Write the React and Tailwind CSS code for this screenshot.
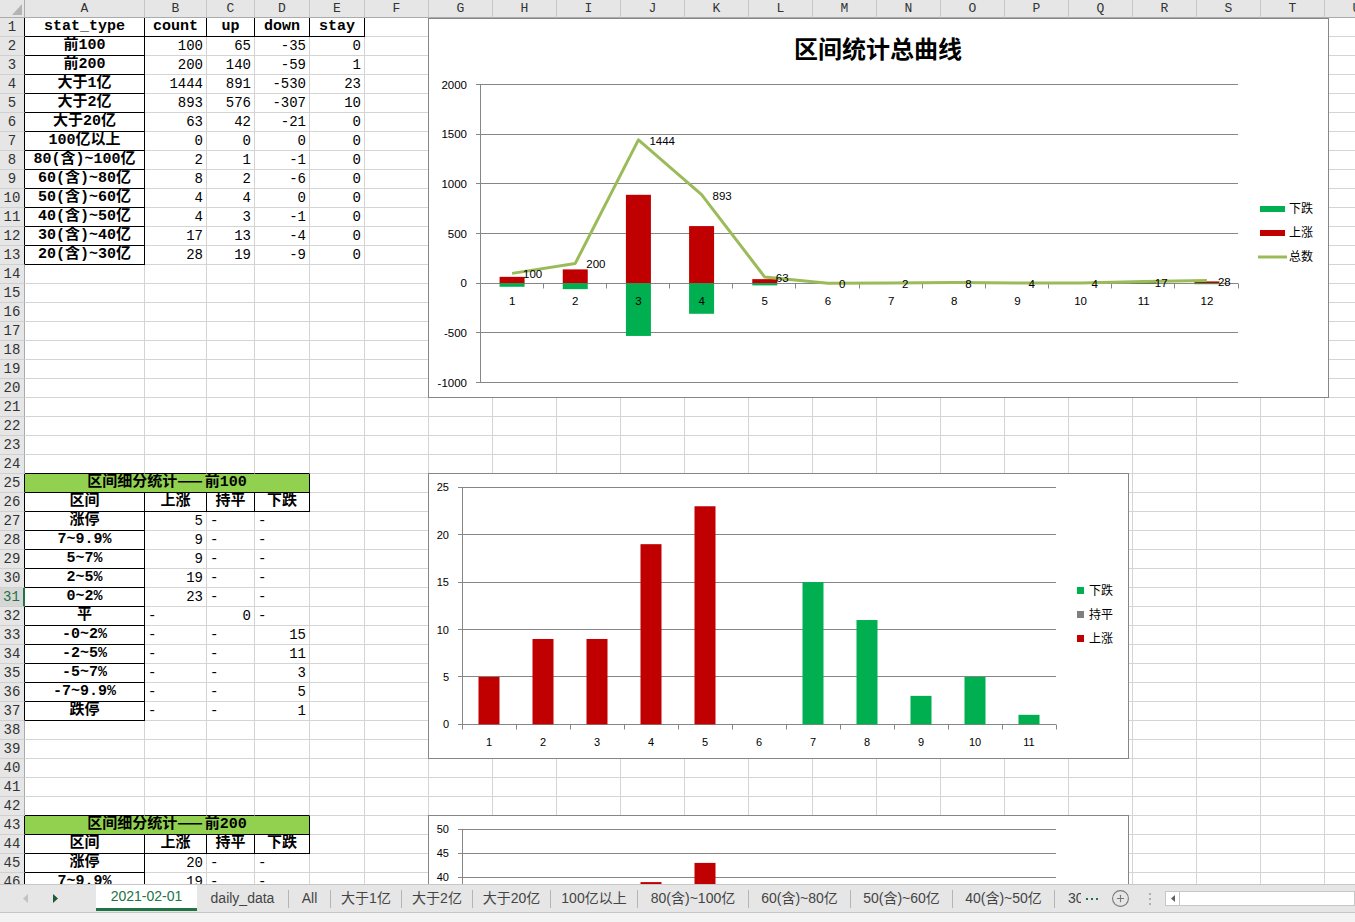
import React from "react";
import clsx from "clsx";
import { CirclePlus } from "lucide-react";

const MONO = "font-['Liberation_Mono','Noto_Sans_CJK_SC',monospace]";
const COLS = "grid grid-cols-[25px_120px_62px_48px_55px_55px_repeat(17,64px)]";
const LETTERS = ["A", "B", "C", "D", "E", "F", "G", "H", "I", "J", "K", "L", "M", "N", "O", "P", "Q", "R", "S", "T", "U", "V"];

// summary table
const T1 = [
  ["stat_type", "count", "up", "down", "stay"],
  ["前100", 100, 65, -35, 0],
  ["前200", 200, 140, -59, 1],
  ["大于1亿", 1444, 891, -530, 23],
  ["大于2亿", 893, 576, -307, 10],
  ["大于20亿", 63, 42, -21, 0],
  ["100亿以上", 0, 0, 0, 0],
  ["80(含)~100亿", 2, 1, -1, 0],
  ["60(含)~80亿", 8, 2, -6, 0],
  ["50(含)~60亿", 4, 4, 0, 0],
  ["40(含)~50亿", 4, 3, -1, 0],
  ["30(含)~40亿", 17, 13, -4, 0],
  ["20(含)~30亿", 28, 19, -9, 0],
];

const TOP100 = [
  ["涨停", 5, "-", "-"],
  ["7~9.9%", 9, "-", "-"],
  ["5~7%", 9, "-", "-"],
  ["2~5%", 19, "-", "-"],
  ["0~2%", 23, "-", "-"],
  ["平", "-", 0, "-"],
  ["-0~2%", "-", "-", 15],
  ["-2~5%", "-", "-", 11],
  ["-5~7%", "-", "-", 3],
  ["-7~9.9%", "-", "-", 5],
  ["跌停", "-", "-", 1],
];

const TOP200 = [
  ["涨停", 20, "-", "-"],
  ["7~9.9%", 19, "-", "-"],
];

function buildCells() {
  const cells = {};
  const set = (r, c, t, align, bold) => {
    cells[`${r}-${c}`] = { t: String(t), align, bold };
  };
  T1.forEach((row, i) => {
    const r = i + 1;
    row.forEach((v, c) => {
      if (r === 1 || c === 0) set(r, c, v, "c", true);
      else set(r, c, v, "r", false);
    });
  });
  const detail = (start, title, rows) => {
    set(start, 0, title, "c", true);
    ["区间", "上涨", "持平", "下跌"].forEach((h, c) => set(start + 1, c, h, "c", true));
    rows.forEach((row, i) => {
      row.forEach((v, c) => {
        const r = start + 2 + i;
        if (c === 0) set(r, 0, v, "c", true);
        else if (v === "-") set(r, c, "-", "l", false);
        else set(r, c, v, "r", false);
      });
    });
  };
  detail(25, "区间细分统计——前100", TOP100);
  detail(43, "区间细分统计——前200", TOP200);
  return cells;
}

const CELLS = buildCells();

function boxed(r, c) {
  if (r === 1) return c <= 4;
  if (r >= 2 && r <= 13) return c === 0;
  if (r === 25 || r === 26 || r === 43 || r === 44) return c <= 3;
  if (r >= 27 && r <= 37) return c === 0;
  if (r >= 45) return c === 0;
  return false;
}

const isMerged = (r) => r === 25 || r === 43;

// em dashes need the CJK font, the mono one draws them half width
function CellText({ t }) {
  if (!t.includes("——")) return t;
  const [a, b] = t.split("——");
  return (
    <>
      {a}
      <span className="font-['Noto_Sans_CJK_SC',sans-serif] leading-[0] tracking-[2px]">——</span>
      {b}
    </>
  );
}

function Cell({ r, c }) {
  const d = CELLS[`${r}-${c}`];
  const rb = boxed(r, c) || boxed(r, c + 1);
  const bb = boxed(r, c) || boxed(r + 1, c);
  const merged = isMerged(r) && c === 0;
  return (
    <div
      className={clsx(
        "h-[19px] border-r border-b overflow-hidden whitespace-nowrap px-[3px] leading-[18px] text-black",
        MONO,
        rb ? "border-r-black" : "border-r-[#d4d4d4]",
        bb ? "border-b-black" : "border-b-[#d4d4d4]",
        merged && "col-span-4 bg-[#92d050]",
        d && d.bold ? "font-bold text-[15px]" : "text-[14px]",
        d && d.align === "c" && "text-center",
        d && d.align === "r" && "text-right",
        d && d.align === "l" && "text-left"
      )}
    >
      {d ? <CellText t={d.t} /> : ""}
    </div>
  );
}

function RowHead({ r }) {
  const active = r === 31;
  return (
    <div
      className={clsx(
        "h-[19px] border-b border-b-[#d0d0d0] text-center text-[14px] leading-[18px]",
        MONO,
        active ? "bg-[#d6d6d6] text-[#217346] border-r-2 border-r-[#217346]" : "bg-[#e6e6e6] text-[#333] border-r",
        !active && (boxed(r, 0) ? "border-r-black" : "border-r-[#ababab]")
      )}
    >
      {r}
    </div>
  );
}

function ColumnHeader() {
  return (
    <div className={clsx(COLS, "h-[18px]")}>
      <div className="relative h-[18px] bg-[#e6e6e6] border-r border-b border-r-[#ababab] border-b-[#ababab]">
        <svg className="absolute right-[2px] bottom-[2px]" width="10" height="11">
          <polygon points="10,0 10,11 0,11" fill="#b4b4b4" />
        </svg>
      </div>
      {LETTERS.map((l) => (
        <div
          key={l}
          className={clsx(
            "h-[18px] bg-[#e6e6e6] border-r border-b border-r-[#c6c6c6] border-b-[#ababab] text-center text-[13px] leading-[17px] text-[#333]",
            MONO
          )}
        >
          {l}
        </div>
      ))}
    </div>
  );
}

function Sheet() {
  const items = [];
  for (let r = 1; r <= 46; r++) {
    items.push(<RowHead key={`h${r}`} r={r} />);
    for (let c = 0; c < 22; c++) {
      if (isMerged(r) && c >= 1 && c <= 3) continue;
      items.push(<Cell key={`${r}-${c}`} r={r} c={c} />);
    }
  }
  return <div className={clsx(COLS, "auto-rows-[19px]")}>{items}</div>;
}

const crisp = (v) => Math.floor(v) + 0.5;
const GRID = "#868686";
const RED = "#c00000";
const GREEN = "#00b050";

// 区间统计总曲线
const UP1 = [65, 140, 891, 576, 42, 0, 1, 2, 4, 3, 13, 19];
const DN1 = [-35, -59, -530, -307, -21, 0, -1, -6, 0, -1, -4, -9];
const TOT1 = [100, 200, 1444, 893, 63, 0, 2, 8, 4, 4, 17, 28];

function Chart1() {
  const y0 = 283.3;
  const k = 0.09933;
  const Y = (v) => y0 - v * k;
  const step = 758 / 12;
  const cx = (i) => 480.5 + (i + 0.5) * step;
  const pts = TOT1.map((v, i) => `${cx(i)},${Y(v)}`).join(" ");
  return (
    <div className="absolute left-[428px] top-[18px] w-[901px] h-[380px] border border-[#868686] bg-white">
      <svg width="899" height="378" className="block font-['Liberation_Sans','Noto_Sans_CJK_SC',sans-serif]">
        <g transform="translate(-429 -19)">
          <text x="878" y="58" textAnchor="middle" fontSize="24" fontWeight="700" fill="#000" className="font-['Noto_Sans_CJK_SC',sans-serif]">
            区间统计总曲线
          </text>
          {[2000, 1500, 1000, 500, 0, -500, -1000].map((v) => (
            <g key={v}>
              <line x1="476" x2="1238" y1={crisp(Y(v))} y2={crisp(Y(v))} stroke={GRID} />
              <text x="467" y={Y(v) + 4} textAnchor="end" fontSize="11.5" fill="#000">
                {v}
              </text>
            </g>
          ))}
          <line x1="480.5" x2="480.5" y1={crisp(Y(2000))} y2={crisp(Y(-1000))} stroke={GRID} />
          {Array.from({ length: 13 }, (_, i) => (
            <line key={i} x1={crisp(480 + i * step)} x2={crisp(480 + i * step)} y1={crisp(y0)} y2={crisp(y0) + 5} stroke={GRID} />
          ))}
          {UP1.map((v, i) => (
            <rect key={`u${i}`} x={cx(i) - 12.5} y={Y(v)} width="25" height={v * k} fill={RED} />
          ))}
          {DN1.map((v, i) => (
            <rect key={`d${i}`} x={cx(i) - 12.5} y={y0} width="25" height={-v * k} fill={GREEN} />
          ))}
          {UP1.map((_, i) => (
            <text key={`x${i}`} x={cx(i)} y="305" textAnchor="middle" fontSize="11.5" fill="#000">
              {i + 1}
            </text>
          ))}
          <polyline points={pts} fill="none" stroke="#9bbb59" strokeWidth="3" strokeLinejoin="round" />
          {TOT1.map((v, i) => (
            <text key={`l${i}`} x={cx(i) + 11} y={Y(v) + 5} fontSize="11.5" fill="#000">
              {v}
            </text>
          ))}
          <rect x="1260" y="206" width="25" height="6" fill={GREEN} />
          <rect x="1260" y="230" width="25" height="6" fill={RED} />
          <line x1="1258" x2="1287" y1="257" y2="257" stroke="#9bbb59" strokeWidth="3" />
          <g fontSize="12" fill="#000" className="font-['Noto_Sans_CJK_SC',sans-serif]">
            <text x="1289" y="213">下跌</text>
            <text x="1289" y="237">上涨</text>
            <text x="1289" y="261">总数</text>
          </g>
        </g>
      </svg>
    </div>
  );
}

// 前100 bar chart
const UP2 = [5, 9, 9, 19, 23, 0, 0, 0, 0, 0, 0];
const DN2 = [0, 0, 0, 0, 0, 0, 15, 11, 3, 5, 1];

function Chart2() {
  const y0 = 724.3;
  const k = 9.48;
  const Y = (v) => y0 - v * k;
  const cx = (i) => 462 + (i + 0.5) * 54;
  return (
    <div className="absolute left-[428px] top-[473px] w-[701px] h-[286px] border border-[#868686] bg-white">
      <svg width="699" height="284" className="block font-['Liberation_Sans','Noto_Sans_CJK_SC',sans-serif]">
        <g transform="translate(-429 -474)">
          {[25, 20, 15, 10, 5, 0].map((v) => (
            <g key={v}>
              <line x1="458" x2="1056" y1={crisp(Y(v))} y2={crisp(Y(v))} stroke={GRID} />
              <text x="449" y={Y(v) + 4} textAnchor="end" fontSize="11" fill="#000">
                {v}
              </text>
            </g>
          ))}
          <line x1="462.5" x2="462.5" y1={crisp(Y(25))} y2={crisp(y0)} stroke={GRID} />
          {Array.from({ length: 12 }, (_, i) => (
            <line key={i} x1={462.5 + i * 54} x2={462.5 + i * 54} y1={crisp(y0)} y2={crisp(y0) + 5} stroke={GRID} />
          ))}
          {UP2.map((v, i) => (
            <rect key={`u${i}`} x={cx(i) - 10.5} y={Y(v)} width="21" height={v * k} fill={RED} />
          ))}
          {DN2.map((v, i) => (
            <rect key={`d${i}`} x={cx(i) - 10.5} y={Y(v)} width="21" height={v * k} fill={GREEN} />
          ))}
          {UP2.map((_, i) => (
            <text key={`x${i}`} x={cx(i)} y="746" textAnchor="middle" fontSize="11" fill="#000">
              {i + 1}
            </text>
          ))}
          <rect x="1077" y="587" width="7" height="7" fill={GREEN} />
          <rect x="1077" y="611" width="7" height="7" fill="#7f7f7f" />
          <rect x="1077" y="635" width="7" height="7" fill={RED} />
          <g fontSize="12" fill="#000" className="font-['Noto_Sans_CJK_SC',sans-serif]">
            <text x="1089" y="595">下跌</text>
            <text x="1089" y="619">持平</text>
            <text x="1089" y="643">上涨</text>
          </g>
        </g>
      </svg>
    </div>
  );
}

// 前200 bar chart (cut off by the sheet tabs)
function Chart3() {
  const Y = (v) => 829.3 + (50 - v) * 4.8;
  const cx = (i) => 462 + (i + 0.5) * 54;
  return (
    <div className="absolute left-[428px] top-[815px] w-[701px] h-[240px] border border-[#868686] bg-white">
      <svg width="699" height="238" className="block font-['Liberation_Sans','Noto_Sans_CJK_SC',sans-serif]">
        <g transform="translate(-429 -816)">
          {[50, 45, 40, 35].map((v) => (
            <g key={v}>
              <line x1="458" x2="1056" y1={crisp(Y(v))} y2={crisp(Y(v))} stroke={GRID} />
              <text x="449" y={Y(v) + 4} textAnchor="end" fontSize="11" fill="#000">
                {v}
              </text>
            </g>
          ))}
          <line x1="462.5" x2="462.5" y1={crisp(Y(50))} y2="1000" stroke={GRID} />
          <rect x={cx(3) - 10.5} y={Y(39)} width="21" height="200" fill={RED} />
          <rect x={cx(4) - 10.5} y={Y(43)} width="21" height="200" fill={RED} />
        </g>
      </svg>
    </div>
  );
}

const TABS = [
  ["daily_data", "w-[91px]"],
  ["All", "w-[41px]"],
  ["大于1亿", "w-[70px]"],
  ["大于2亿", "w-[70px]"],
  ["大于20亿", "w-[77px]"],
  ["100亿以上", "w-[86px]"],
  ["80(含)~100亿", "w-[110px]"],
  ["60(含)~80亿", "w-[101px]"],
  ["50(含)~60亿", "w-[101px]"],
  ["40(含)~50亿", "w-[101px]"],
];

function TabBar() {
  return (
    <div className="h-[28px] shrink-0 bg-[#e6e6e6] border-t border-[#c6c6c6] flex text-[14px] text-[#444] font-['Liberation_Sans','Noto_Sans_CJK_SC',sans-serif]">
      {/* sheet navigation arrows */}
      <div className="w-[96px] flex items-center">
        <svg className="ml-[23px]" width="5" height="9">
          <polygon points="5,0 5,9 0,4.5" fill="#c2c2c2" />
        </svg>
        <svg className="ml-[25px]" width="5" height="9">
          <polygon points="0,0 0,9 5,4.5" fill="#1e5a37" />
        </svg>
      </div>

      <div className="w-[101px] h-[26px] bg-white border-b-[3px] border-[#217346] flex items-center justify-center text-[#217346]">
        2021-02-01
      </div>

      {TABS.map(([name, w]) => (
        <React.Fragment key={name}>
          <div className={clsx(w, "flex items-center justify-center whitespace-nowrap")}>{name}</div>
          <div className="w-px h-[18px] self-center bg-[#b5b5b5]" />
        </React.Fragment>
      ))}

      <div className="w-[26px] overflow-hidden flex items-center pl-[13px] whitespace-nowrap">30(含)~40亿</div>

      <div className="ml-[5px] flex items-center gap-[3px]">
        <span className="w-[2px] h-[2px] bg-[#217346]" />
        <span className="w-[2px] h-[2px] bg-[#217346]" />
        <span className="w-[2px] h-[2px] bg-[#217346]" />
      </div>

      <div className="ml-[13px] flex items-center">
        <CirclePlus size={19} strokeWidth={1.4} color="#7a7a7a" />
      </div>

      <div className="ml-[19px] flex flex-col justify-center gap-[3px]">
        <span className="w-[2px] h-[2px] bg-[#b0b0b0]" />
        <span className="w-[2px] h-[2px] bg-[#b0b0b0]" />
        <span className="w-[2px] h-[2px] bg-[#b0b0b0]" />
      </div>

      {/* horizontal scroll bar */}
      <div className="ml-[14px] flex-1 self-center h-[15px] bg-white border border-[#c6c6c6] flex">
        <div className="w-[14px] border-r border-[#c6c6c6] flex items-center justify-center">
          <svg width="4" height="7">
            <polygon points="4,0 4,7 0,3.5" fill="#606060" />
          </svg>
        </div>
      </div>
    </div>
  );
}

export default function App() {
  return (
    <div className="w-[1355px] h-[922px] overflow-hidden bg-white flex flex-col">
      <div className="relative h-[884px] shrink-0 overflow-hidden">
        <ColumnHeader />
        <Sheet />
        <Chart1 />
        <Chart2 />
        <Chart3 />
      </div>
      <TabBar />
      <div className="flex-1 bg-[#f3f3f3] border-t border-[#c6c6c6]" />
    </div>
  );
}
